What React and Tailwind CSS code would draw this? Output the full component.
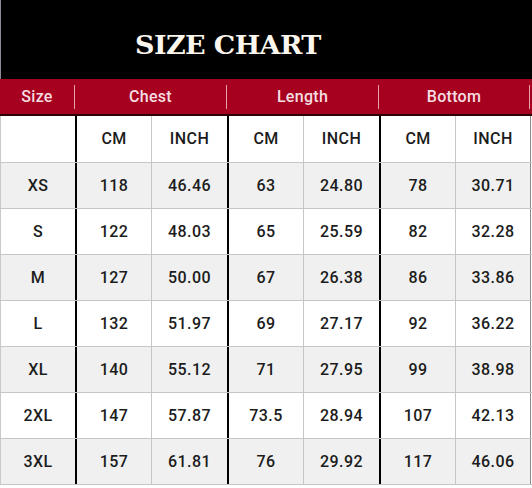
import React from "react"

const rows = [
  ["XS", "118", "46.46", "63", "24.80", "78", "30.71"],
  ["S", "122", "48.03", "65", "25.59", "82", "32.28"],
  ["M", "127", "50.00", "67", "26.38", "86", "33.86"],
  ["L", "132", "51.97", "69", "27.17", "92", "36.22"],
  ["XL", "140", "55.12", "71", "27.95", "99", "38.98"],
  ["2XL", "147", "57.87", "73.5", "28.94", "107", "42.13"],
  ["3XL", "157", "61.81", "76", "29.92", "117", "46.06"],
]

// which left border each column gets
const colBorder = [
  "border-l border-[#c9c9d0]",
  "border-l-2 border-black",
  "border-l border-[#c6c6c6]",
  "border-l-2 border-black",
  "border-l border-[#c6c6c6]",
  "border-l-2 border-black",
  "border-l border-[#c6c6c6]",
]

function Row({ cells, shaded, tall }) {
  return (
    <div
      className={`grid grid-cols-[75px_76px_76px_76px_76px_76px_75px_2px] border-b border-[#c6c6c6] ${
        tall ? "h-[47px]" : "h-[46px]"
      } ${shaded ? "bg-[#f0f0f0]" : "bg-white"}`}
    >
      {cells.map((c, i) => (
        <div key={i} className={`flex items-center justify-center ${colBorder[i]}`}>
          {c}
        </div>
      ))}
      <div className="border-l border-[#8a8a8a] bg-white" />
    </div>
  )
}

export default function App() {
  return (
    <div className="w-[532px] h-[488px] overflow-hidden bg-white font-['Roboto',sans-serif]">
      {/* Title */}
      <div className="h-[79px] bg-black border-l border-[#8a8a98] pl-[134px] pt-[31px]">
        <h1 className="font-['DejaVu_Serif',serif] font-black text-[27px] leading-none text-[#fbf7ee] tracking-[-0.6px] scale-y-[0.95]">
          SIZE CHART
        </h1>
      </div>

      {/* Group header */}
      <div className="h-[35px] bg-[#a6021f] flex items-center text-[16px] font-medium text-[#f6dde2] tracking-[0.3px]">
        <div className="w-[74px] text-center">Size</div>
        <div className="w-px h-[24px] bg-[#e6a2ae]" />
        <div className="w-[151px] text-center">Chest</div>
        <div className="w-px h-[24px] bg-[#e6a2ae]" />
        <div className="w-[151px] text-center">Length</div>
        <div className="w-px h-[24px] bg-[#e6a2ae]" />
        <div className="w-[150px] text-center">Bottom</div>
        <div className="w-px h-[24px] bg-[#e6a2ae]" />
      </div>
      <div className="h-[2px] bg-[#2a0308]" />

      {/* Table */}
      <div className="text-[16px] font-medium text-[#1c1c1c] tracking-[0.4px]">
        <Row cells={["", "CM", "INCH", "CM", "INCH", "CM", "INCH"]} shaded={false} tall />
        {rows.map((r, i) => (
          <Row key={r[0]} cells={r} shaded={i % 2 === 0} />
        ))}
      </div>
    </div>
  )
}
